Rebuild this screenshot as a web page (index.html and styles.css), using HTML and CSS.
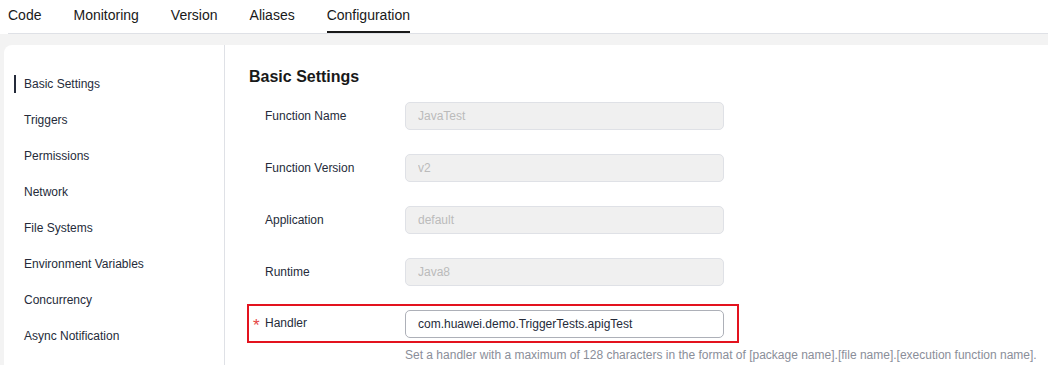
FILE: index.html
```html
<!DOCTYPE html>
<html lang="en">

<head>
  <meta charset="UTF-8">
  <meta name="viewport" content="width=device-width, initial-scale=1.0">
  <title>Function Configuration</title>
  <link rel="stylesheet" href="styles.css">
</head>

<body>
  <div class="header">
    <div class="tabs">
      <div class="tab">Code</div>
      <div class="tab">Monitoring</div>
      <div class="tab">Version</div>
      <div class="tab">Aliases</div>
      <div class="tab active">Configuration</div>
    </div>
  </div>

  <div class="page">
    <div class="panel">
      <ul class="side-menu">
        <li class="active">Basic Settings</li>
        <li>Triggers</li>
        <li>Permissions</li>
        <li>Network</li>
        <li>File Systems</li>
        <li>Environment Variables</li>
        <li>Concurrency</li>
        <li>Async Notification</li>
      </ul>

      <div class="content">
        <h2>Basic Settings</h2>

        <div class="form">
          <div class="form-row">
            <label>Function Name</label>
            <input type="text" value="JavaTest" disabled>
          </div>
          <div class="form-row">
            <label>Function Version</label>
            <input type="text" value="v2" disabled>
          </div>
          <div class="form-row">
            <label>Application</label>
            <input type="text" value="default" disabled>
          </div>
          <div class="form-row">
            <label>Runtime</label>
            <input type="text" value="Java8" disabled>
          </div>
          <div class="form-row highlight">
            <label><span class="req">*</span>Handler</label>
            <input type="text" value="com.huawei.demo.TriggerTests.apigTest">
          </div>
        </div>
        <p class="help">Set a handler with a maximum of 128 characters in the format of [package name].[file name].[execution function name].</p>
      </div>
    </div>
  </div>
</body>

</html>
```

FILE: styles.css
```css
body {
  margin: 0;
  font-family: "Liberation Sans", Arial, sans-serif;
  color: #252b3a;
  background: #f3f3f3;
  overflow: hidden;
}

.header {
  background: #fff;
  padding-left: 8px;
}

.tabs {
  display: flex;
  gap: 32px;
  border-bottom: 1px solid #dfe1e6;
}

.tab {
  font-size: 14px;
  line-height: 20px;
  padding: 5px 0 6px;
  color: #191919;
  border-bottom: 2px solid transparent;
}

.tab.active {
  border-bottom-color: #191919;
}

.page {
  padding: 11px 0 0 4px;
}

.panel {
  display: flex;
  background: #fff;
  border-top-left-radius: 8px;
  height: 330px;
}

.side-menu {
  list-style: none;
  margin: 0;
  padding: 21px 0 0;
  width: 220px;
  border-right: 1px solid #dfe1e6;
}

.side-menu li {
  position: relative;
  font-size: 12px;
  line-height: 36px;
  padding-left: 20px;
  color: #252b3a;
}

.side-menu li.active::before {
  content: "";
  position: absolute;
  left: 10px;
  top: 9px;
  width: 2px;
  height: 18px;
  background: #252b3a;
}

.content {
  padding: 20px 0 0 24px;
}

.content h2 {
  margin: 0 0 13px;
  font-size: 16px;
  line-height: 24px;
  font-weight: bold;
  color: #191919;
}

.form {
  display: flex;
  flex-direction: column;
  align-items: flex-start;
  gap: 24px;
}

.form-row {
  position: relative;
  display: flex;
  align-items: center;
  padding-left: 16px;
}

.form-row label {
  width: 140px;
  font-size: 12px;
  color: #252b3a;
}

.form-row input {
  box-sizing: border-box;
  width: 319px;
  height: 28px;
  padding: 0 12px;
  border: 1px solid #adb0b8;
  border-radius: 5px;
  font-family: inherit;
  font-size: 12px;
  color: #252b3a;
  background: #fff;
}

.form-row input:disabled {
  background: #f0f0f0;
  border-color: #dfe1e6;
  color: #bbbbbb;
}

.req {
  display: inline-block;
  width: 12px;
  margin-left: -12px;
  color: #e54545;
  font-size: 17px;
  line-height: 12px;
  vertical-align: -4px;
}

.highlight::after {
  content: "";
  position: absolute;
  left: -2px;
  top: -6px;
  right: -15px;
  bottom: -5px;
  border: 2px solid #e3131e;
}

.help {
  margin: 9px 0 0 156px;
  font-size: 12px;
  line-height: 16px;
  color: #8a8e99;
  white-space: nowrap;
}
```
